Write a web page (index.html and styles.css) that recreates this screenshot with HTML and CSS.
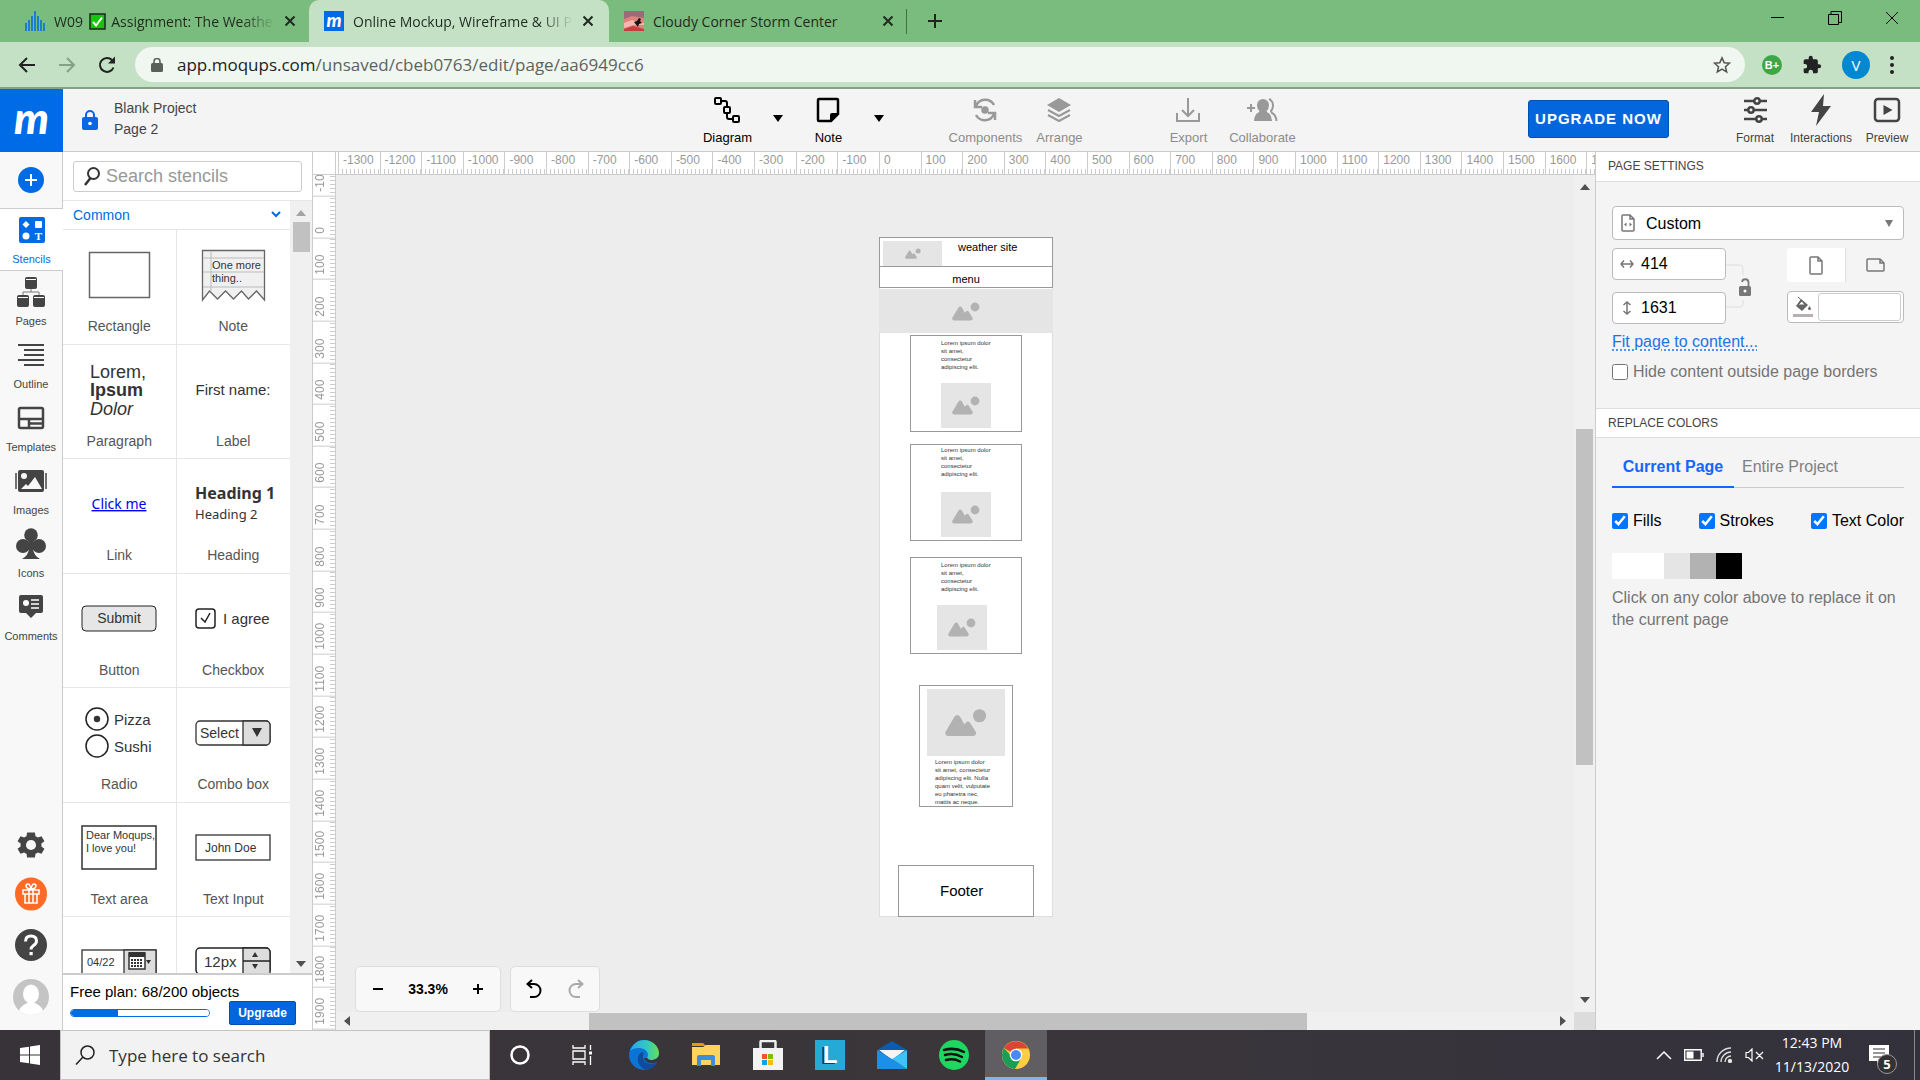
FILE: index.html
```html
<!DOCTYPE html>
<html lang="en">
<head>
<meta charset="utf-8">
<title>Online Mockup, Wireframe &amp; UI Prototyping</title>
<link rel="stylesheet" href="styles.css">
</head>
<body>
<svg class="defs" aria-hidden="true">
  <symbol id="picture" viewBox="0 0 28 19"><path d="M2 18.5h17q2.600-.6 1.300-3.200l-3.500-5.500q-1.500-1.900-3 0l-1 .9-2.600-4.800q-2-2.900-4 0L.4 15.700q-.8 2.500 1.600 2.800z"/><circle cx="23" cy="5" r="4.400"/></symbol>
  <symbol id="close" viewBox="0 0 12 12"><path d="M1.500 1.500l9 9M10.500 1.500l-9 9" fill="none" stroke="currentColor" stroke-width="2"/></symbol>
  <symbol id="caret" viewBox="0 0 10 8"><path d="M0 1h10L5 8z" fill="currentColor"/></symbol>
  <symbol id="up" viewBox="0 0 10 6"><path d="M5 0l5 6H0z"/></symbol>
  <symbol id="down" viewBox="0 0 10 6"><path d="M0 0h10L5 6z"/></symbol>
</svg>

<header class="tabs">
  <div class="tab">
    <svg width="20" height="20" viewBox="0 0 20 20" stroke="#1c7ed0" stroke-width="2"><path d="M1 20V12M4 20V9M7 20V5M10 20V0M13 20V5M16 20V9M19 20V12"/></svg>
    <span class="tab-title fade">W09 <svg class="check" width="17" height="17" viewBox="0 0 17 17"><rect x="1" y="1" width="15" height="15" fill="#16c60c" stroke="#222" stroke-width="1.500"/><path d="M4 9l3 3.500 6-8" fill="none" stroke="#fff" stroke-width="2"/></svg> Assignment: The Weather Site</span>
    <button class="plain" aria-label="Close tab"><svg width="12" height="12"><use href="#close"/></svg></button>
  </div>
  <div class="tab active">
    <span class="m-icon">m</span>
    <span class="tab-title fade">Online Mockup, Wireframe &amp; UI Prototyping</span>
    <button class="plain" aria-label="Close tab"><svg width="12" height="12"><use href="#close"/></svg></button>
  </div>
  <div class="tab">
    <svg width="20" height="20" viewBox="0 0 20 20"><rect width="20" height="20" fill="#e0837c"/><path d="M0 0h20v7L8 5 0 8z" fill="#9c6b77"/><path d="M0 12l8-3 5 2 7 1v2L9 14 0 17z" fill="#f3b9b0"/><path d="M0 18l9-3 11 3v2H0z" fill="#c2403e"/><path d="M10 11l3-1 2-3 2 1-1 2 2 2-3 1-1 3z" fill="#111"/></svg>
    <span class="tab-title">Cloudy Corner Storm Center</span>
    <button class="plain" aria-label="Close tab"><svg width="12" height="12"><use href="#close"/></svg></button>
  </div>
  <span class="tab-sep"></span>
  <button class="plain new-tab" aria-label="New tab"><svg width="14" height="14" viewBox="0 0 14 14"><path d="M7 0v14M0 7h14" stroke="#222" stroke-width="2"/></svg></button>
  <div class="window-buttons">
    <button class="plain" aria-label="Minimize"><svg width="14" height="14" viewBox="0 0 14 14"><path d="M0 6.500h13" stroke="#000"/></svg></button>
    <button class="plain" aria-label="Restore"><svg width="14" height="14" viewBox="0 0 14 14" fill="none" stroke="#000"><path d="M.5 3.500h10v10H.5zM3 3V.5h10.500v11H11"/></svg></button>
    <button class="plain" aria-label="Close"><svg width="14" height="14" viewBox="0 0 14 14"><path d="M1 1l12 12M13 1L1 13" stroke="#000"/></svg></button>
  </div>
</header>

<nav class="browser-bar">
  <button class="plain" aria-label="Back"><svg width="18" height="16" viewBox="0 0 18 16" fill="none" stroke="#222" stroke-width="2"><path d="M17 8H2M9 1L2 8l7 7"/></svg></button>
  <button class="plain" aria-label="Forward"><svg width="18" height="16" viewBox="0 0 18 16" fill="none" stroke="#85a086" stroke-width="2"><path d="M1 8h15M9 1l7 7-7 7"/></svg></button>
  <button class="plain" aria-label="Reload"><svg width="18" height="18" viewBox="0 0 18 18" fill="none" stroke="#222" stroke-width="2"><path d="M15.500 11.500A7 7 0 1 1 14 4l2 2"/><path d="M17 .5v7h-7z" fill="#222" stroke="none"/></svg></button>
  <div class="address">
    <svg width="12" height="14" viewBox="0 0 12 14"><rect y="5" width="12" height="9" rx="1.500" fill="#5a5f5b"/><path d="M3 6V3.500a3 3 0 0 1 6 0V6" fill="none" stroke="#5a5f5b" stroke-width="1.600"/></svg>
    <span class="url"><b>app.moqups.com</b>/unsaved/cbeb0763/edit/page/aa6949cc6</span>
    <svg width="18" height="18" viewBox="0 0 24 24" fill="none" stroke="#555" stroke-width="2"><path d="M12 2.500l2.900 6.400 7 .7-5.300 4.700 1.600 6.900-6.200-3.600-6.200 3.600 1.600-6.900L2.100 9.600l7-.7z"/></svg>
  </div>
  <div class="extensions">
    <span class="bplus">B+</span>
    <svg width="20" height="20" viewBox="0 0 24 24" fill="#222"><path d="M20.500 11H19V7a2 2 0 0 0-2-2h-4V3.500a2.500 2.500 0 0 0-5 0V5H4a2 2 0 0 0-2 2v3.800h1.500a2.700 2.700 0 0 1 0 5.400H2V20a2 2 0 0 0 2 2h3.800v-1.500a2.700 2.700 0 0 1 5.400 0V22H17a2 2 0 0 0 2-2v-4h1.500a2.500 2.500 0 0 0 0-5z"/></svg>
    <span class="profile">V</span>
    <svg width="4" height="18" viewBox="0 0 4 18" fill="#222"><circle cx="2" cy="2" r="2"/><circle cx="2" cy="9" r="2"/><circle cx="2" cy="16" r="2"/></svg>
  </div>
</nav>

<div class="app-bar">
  <div class="app-left">
    <a class="logo" href="#">m</a>
    <svg width="16" height="20" viewBox="0 0 16 20"><rect y="7" width="16" height="13" rx="2" fill="#0a66e6"/><path d="M4 8V5a4 4 0 0 1 8 0v3" fill="none" stroke="#0a66e6" stroke-width="2"/><circle cx="8" cy="13.500" r="1.800" fill="#fff"/></svg>
    <div class="project"><div>Blank Project</div><div>Page 2</div></div>
  </div>
  <div class="app-tools">
    <button class="tool w60"><svg width="28" height="28" viewBox="0 0 28 28" fill="none" stroke="#000" stroke-width="2"><rect x="2" y="2" width="6" height="6" rx="1"/><rect x="11" y="11" width="6" height="6" rx="1"/><rect x="20" y="20" width="6" height="6" rx="1"/><path d="M8 5h4q2 0 2 2v4M14 17v4q0 2 2 2h4"/></svg>Diagram</button>
    <button class="tool arrow" aria-label="Diagram options"><svg width="10" height="8"><use href="#caret"/></svg></button>
    <button class="tool w60"><svg width="28" height="28" viewBox="0 0 28 28"><path d="M5 3h18a1 1 0 0 1 1 1v14l-7 7H5a1 1 0 0 1-1-1V4a1 1 0 0 1 1-1z" fill="none" stroke="#000" stroke-width="2.500"/><path d="M24 17l-8 8v-6q0-2 2-2z"/></svg>Note</button>
    <button class="tool arrow" aria-label="Note options"><svg width="10" height="8"><use href="#caret"/></svg></button>
    <button class="tool off w80 gap-a"><svg width="28" height="28" viewBox="0 0 28 28" fill="none" stroke="#999" stroke-width="2.500"><path d="M5 10A10 10 0 0 1 23 9M23 18A10 10 0 0 1 5 19"/><path d="M4 4v7h7M24 24v-7h-7"/><circle cx="14" cy="14" r="2.500" fill="#999"/></svg>Components</button>
    <button class="tool off w68"><svg width="28" height="28" viewBox="0 0 28 28" fill="#999"><path d="M14 2l12 7-12 7L2 9z"/><path d="M3 14l11 6 11-6M3 19l11 6 11-6" fill="none" stroke="#999" stroke-width="2"/></svg>Arrange</button>
    <button class="tool off w68 gap-b"><svg width="28" height="28" viewBox="0 0 28 28" fill="none" stroke="#999" stroke-width="2"><path d="M14 2v18M8 14l6 6 6-6M3 17v8h22v-8"/></svg>Export</button>
    <button class="tool off w80"><svg width="34" height="28" viewBox="0 0 34 28" fill="#999"><path d="M2 12h8M6 8v8" stroke="#999" stroke-width="2"/><path d="M18 3a6 6 0 0 1 6 6q0 4-2.500 6l1 1.500q4 1.500 4.500 8.500H9q.5-7 4.500-8.500l1-1.500Q12 13 12 9a6 6 0 0 1 6-6z"/><path d="M24 3q4 2 4 6.500 0 3.500-2 5.500l1 2q4 2 4.500 8" fill="none" stroke="#999" stroke-width="2"/></svg>Collaborate</button>
  </div>
  <div class="app-right">
    <button class="upgrade-now">UPGRADE NOW</button>
    <button class="tool dark"><svg width="28" height="28" viewBox="0 0 28 28" fill="#f4f4f4" stroke="#444" stroke-width="2.500"><path d="M3 5h23M3 14h23M3 23h23"/><circle cx="16" cy="5" r="2.700"/><circle cx="10" cy="14" r="2.700"/><circle cx="18" cy="23" r="2.700"/></svg>Format</button>
    <button class="tool dark"><svg width="28" height="32" viewBox="0 0 28 32" fill="#444"><path d="M17 0L4 18h8l-3 14 15-20h-8z"/></svg>Interactions</button>
    <button class="tool dark"><svg width="28" height="28" viewBox="0 0 28 28"><rect x="2" y="3" width="24" height="22" rx="3" fill="none" stroke="#444" stroke-width="2.500"/><path d="M10.500 9l9 5-9 5z" fill="#444"/></svg>Preview</button>
  </div>
</div>

<main class="app">
  <nav class="rail">
    <button class="add" aria-label="Add"><svg width="26" height="26" viewBox="0 0 26 26"><circle cx="13" cy="13" r="13" fill="#006be6"/><path d="M13 7v12M7 13h12" stroke="#fff" stroke-width="2"/></svg></button>
    <button class="rail-item current"><svg width="28" height="28" viewBox="0 0 28 28"><rect x="1" y="1" width="26" height="26" rx="2" fill="#006be6"/><path d="M8 5l3.500 3.500L8 12 4.500 8.500z" fill="#fff"/><rect x="17" y="5" width="7" height="7" rx="1" fill="#fff"/><circle cx="8" cy="20" r="3.500" fill="#fff"/><text x="20.500" y="24" class="t-glyph">T</text></svg>Stencils</button>
    <button class="rail-item"><svg width="28" height="30" viewBox="0 0 28 30" fill="#444"><rect x="8" y="0" width="12" height="12" rx="2"/><rect x="0" y="18" width="12" height="12" rx="2"/><rect x="16" y="18" width="12" height="12" rx="2"/><path d="M9 2.500h10M1 20.500h10M17 20.500h10" stroke="#fff"/><path d="M14 12v3M6 18v-3h16v3" fill="none" stroke="#777"/></svg>Pages</button>
    <button class="rail-item"><svg width="28" height="24" viewBox="0 0 28 24" stroke="#444" stroke-width="2"><path d="M1 2h26M7 7h20M7 12h20M1 17h26M7 22h20"/></svg>Outline</button>
    <button class="rail-item"><svg width="28" height="24" viewBox="0 0 28 24" fill="none" stroke="#444" stroke-width="2.500"><rect x="2" y="2" width="24" height="20" rx="1.500"/><path d="M2 13h24M12 13v9M13 17.500h13"/></svg>Templates</button>
    <button class="rail-item"><svg width="32" height="24" viewBox="0 0 32 24"><rect x="3" y="1" width="26" height="22" rx="2" fill="#444"/><path d="M1 4v16M31 4v16" stroke="#444" stroke-width="1.500"/><circle cx="9" cy="7" r="3" fill="#f8f8f8"/><path d="M6 20l5-5 2 2 7-9 7 12z" fill="#f8f8f8"/></svg>Images</button>
    <button class="rail-item"><svg width="30" height="32" viewBox="0 0 30 32" fill="#444"><circle cx="15" cy="7" r="6.800"/><circle cx="7" cy="18" r="7"/><circle cx="23" cy="18" r="7"/><path d="M12 11h6l-1 10q1 7 7 10H6q6-3 7-10z"/></svg>Icons</button>
    <button class="rail-item"><svg width="26" height="24" viewBox="0 0 26 24"><path d="M3 0h20a2 2 0 0 1 2 2v14a2 2 0 0 1-2 2h-5l-5 5-5-5H3a2 2 0 0 1-2-2V2a2 2 0 0 1 2-2z" fill="#444"/><circle cx="8" cy="8" r="3" fill="#fff"/><path d="M13 5h8M13 9h8M13 13h8" stroke="#fff" stroke-width="1.500"/></svg>Comments</button>
    <div class="rail-bottom">
      <button class="plain" aria-label="Settings"><svg width="32" height="28" viewBox="2 2 20 20" fill="#444"><path d="M19.400 13a7 7 0 0 0 0-2l2.200-1.700-2.100-3.600-2.600 1a7 7 0 0 0-1.700-1L14.800 3H9.200l-.4 2.700a7 7 0 0 0-1.700 1l-2.600-1-2.100 3.600L4.600 11a7 7 0 0 0 0 2l-2.200 1.700 2.100 3.600 2.600-1a7 7 0 0 0 1.700 1l.4 2.700h5.600l.4-2.700a7 7 0 0 0 1.700-1l2.600 1 2.100-3.600z"/><circle cx="12" cy="12" r="3.600" fill="#f8f8f8"/></svg></button>
      <button class="plain" aria-label="Gifts"><svg width="32" height="34" viewBox="0 0 32 34"><ellipse cx="16" cy="17" rx="16" ry="16.500" fill="#ff6a26"/><g fill="none" stroke="#fff" stroke-width="1.500"><path d="M8 13h16v4H8zM10 17v9h12v-9M14 13v13M18 13v13M16 12c-6 0-6-5-3-5q2 0 3 5 1-5 3-5c3 0 3 5-3 5"/></g></svg></button>
      <button class="plain" aria-label="Help"><svg width="32" height="32" viewBox="0 0 32 32"><circle cx="16" cy="16" r="16" fill="#444"/><path d="M10.500 12.500q0-5.500 5.500-5.500t5.500 5q0 2.500-3 4.500-2.500 1.800-2.500 4" fill="none" stroke="#fff" stroke-width="3"/><rect x="14.500" y="23" width="3.200" height="3.200" fill="#fff"/></svg></button>
      <button class="plain" aria-label="Account"><svg width="36" height="36" viewBox="0 0 36 36"><clipPath id="av"><circle cx="18" cy="18" r="18"/></clipPath><g clip-path="url(#av)"><path d="M0 0h36v36H0z" fill="#c4c4c4"/><ellipse cx="18" cy="15" rx="8" ry="9.500" fill="#fff"/><path d="M5 36q1-9 9-12h8q8 3 9 12z" fill="#fff"/></g></svg></button>
    </div>
  </nav>

  <section class="stencils">
    <div class="search-row">
      <label class="search"><svg width="16" height="20" viewBox="0 0 16 20" fill="none" stroke="#333"><circle cx="9.500" cy="6.500" r="5.500" stroke-width="2"/><path d="M6.500 11L1 18" stroke-width="2.500"/></svg><input type="text" placeholder="Search stencils" aria-label="Search stencils"></label>
    </div>
    <div class="list">
      <div class="list-body">
        <button class="category">Common<svg width="10" height="7" viewBox="0 0 10 7" fill="none" stroke="#006be6" stroke-width="2"><path d="M1 1l4 4 4-4"/></svg></button>
        <div class="tiles">
          <button class="tile"><svg width="80" height="60"><rect x="10.500" y="7.500" width="60" height="45" fill="none" stroke="#666" stroke-width="1.500"/></svg>Rectangle</button>
          <button class="tile"><svg width="80" height="60"><path d="M9.500 55V5.500h62V55l-8-9-8 8-7-8-8 8-8-8-8 8-8-8z" fill="#f0f0f0" stroke="#666" stroke-width="1.300"/><path d="M10 13h61M10 27h61M10 42h61M18 6v40" stroke="#bbb"/><text x="19" y="24" class="t11">One more</text><text x="19" y="37" class="t11">thing..</text></svg>Note</button>
          <button class="tile"><svg width="80" height="60"><text x="11" y="18" class="t18">Lorem,</text><text x="11" y="36" class="t18 bold">Ipsum</text><text x="11" y="55" class="t18 ital">Dolor</text></svg>Paragraph</button>
          <button class="tile"><svg width="84" height="60"><text x="42" y="35" class="t15 mid">First name:</text></svg>Label</button>
          <button class="tile"><svg width="80" height="60"><text x="40" y="35" class="t14 mid link hum">Click me</text></svg>Link</button>
          <button class="tile"><svg width="84" height="60"><text x="4" y="25" class="t16 bold hum">Heading 1</text><text x="4" y="45" class="t13 hum">Heading 2</text></svg>Heading</button>
          <button class="tile"><svg width="80" height="60"><rect x="3" y="17" width="74" height="25" rx="4" fill="#e6e6e6" stroke="#222"/><text x="40" y="34" class="t14 mid">Submit</text></svg>Button</button>
          <button class="tile"><svg width="80" height="60"><rect x="3" y="20" width="19" height="19" rx="3" fill="#fff" stroke="#222" stroke-width="1.500"/><path d="M8 29l4 4 5-9" fill="none" stroke="#222" stroke-width="1.500"/><text x="30" y="35" class="t15">I agree</text></svg>Checkbox</button>
          <button class="tile"><svg width="80" height="60"><g fill="#fff" stroke="#222" stroke-width="1.500"><circle cx="18" cy="16" r="11"/><circle cx="18" cy="43" r="11"/></g><circle cx="18" cy="16" r="3.200" fill="#333"/><text x="35" y="22" class="t15">Pizza</text><text x="35" y="49" class="t15">Sushi</text></svg>Radio</button>
          <button class="tile"><svg width="80" height="60"><rect x="3" y="18" width="74" height="24" rx="4" fill="#fff" stroke="#333" stroke-width="1.300"/><path d="M50 18h23a4 4 0 0 1 4 4v16a4 4 0 0 1-4 4H50z" fill="#ddd" stroke="#333" stroke-width="1.300"/><path d="M59 25h10l-5 9z" fill="#333"/><text x="7" y="35" class="t14">Select</text></svg>Combo box</button>
          <button class="tile"><svg width="80" height="60"><rect x="3" y="8" width="74" height="43" fill="#fff" stroke="#333" stroke-width="1.500"/><text x="7" y="21" class="t11">Dear Moqups,</text><text x="7" y="34" class="t11">I love you!</text></svg>Text area</button>
          <button class="tile"><svg width="80" height="60"><rect x="3" y="17" width="74" height="25" fill="#fff" stroke="#333" stroke-width="1.300"/><text x="12" y="34" class="t12">John Doe</text></svg>Text Input</button>
          <button class="tile" aria-label="Date picker"><svg width="80" height="60"><rect x="3" y="18" width="74" height="25" fill="#fff" stroke="#333" stroke-width="1.300"/><rect x="45" y="18" width="32" height="25" fill="#ddd" stroke="#333" stroke-width="1.300"/><text x="8" y="34" class="t11">04/22</text><path d="M50 21h16v16H50z" fill="#fff" stroke="#333" stroke-width="1.500"/><path d="M50 20h16v5H50z" fill="#333"/><path d="M52 28h12M52 31h12M52 34h12" stroke="#333" stroke-width="2" stroke-dasharray="2 1"/><path d="M67 28h5l-2.500 4z" fill="#333"/></svg></button>
          <button class="tile" aria-label="Number stepper"><svg width="80" height="60"><rect x="3" y="16" width="74" height="26" rx="4" fill="#fff" stroke="#222" stroke-width="1.500"/><path d="M50 16h23a4 4 0 0 1 4 4v22H50zM50 29h27" fill="#ddd" stroke="#222" stroke-width="1.300"/><path d="M59 25h6l-3-5zM59 32h6l-3 5z" fill="#333"/><text x="11" y="35" class="t15">12px</text></svg></button>
        </div>
      </div>
      <div class="scroll-v light"><svg width="10" height="6" fill="#a3a3a3"><use href="#up"/></svg><span class="thumb-list"></span><svg width="10" height="6" fill="#505050"><use href="#down"/></svg></div>
    </div>
    <div class="plan">
      <label for="plan-use">Free plan: 68/200 objects</label>
      <div class="plan-row"><progress id="plan-use" max="200" value="68"></progress><button class="upgrade">Upgrade</button></div>
    </div>
  </section>

  <section class="workspace">
    <div class="corner"></div>
    <div class="ruler-x"><div class="scale-x" id="scale-x"></div></div>
    <div class="ruler-y"><div class="scale-y" id="scale-y"></div></div>
    <div class="view">
      <div class="canvas">
        <div class="page">
          <div class="item box site-head"></div>
          <div class="item ph site-logo"><svg width="16" height="11"><use href="#picture"/></svg></div>
          <div class="item site-name">weather site</div>
          <div class="item box site-menu">menu</div>
          <div class="item ph hero"><svg width="28" height="19"><use href="#picture"/></svg></div>
          <div class="item box card c1"></div>
          <p class="item lorem clip l1">Lorem ipsum dolor sit amet, consectetur adipiscing elit. Nulla quam velit</p>
          <div class="item ph p1"><svg width="28" height="19"><use href="#picture"/></svg></div>
          <div class="item box card c2"></div>
          <p class="item lorem clip l2">Lorem ipsum dolor sit amet, consectetur adipiscing elit. Nulla quam velit</p>
          <div class="item ph p2"><svg width="28" height="19"><use href="#picture"/></svg></div>
          <div class="item box card c3"></div>
          <p class="item lorem clip l3">Lorem ipsum dolor sit amet, consectetur adipiscing elit. Nulla quam velit</p>
          <div class="item ph p3"><svg width="28" height="19"><use href="#picture"/></svg></div>
          <div class="item box c4"></div>
          <div class="item ph p4"><svg width="42" height="29"><use href="#picture"/></svg></div>
          <p class="item lorem l4">Lorem ipsum dolor sit amet, consectetur adipiscing elit. Nulla quam velit, vulputate eu pharetra nec, mattis ac neque.</p>
          <div class="item box foot">Footer</div>
        </div>
        <div class="controls">
          <div class="control zoom"><button class="plain" aria-label="Zoom out"><svg width="12" height="12"><path d="M1 6h10" stroke="#000" stroke-width="2"/></svg></button><output>33.3%</output><button class="plain" aria-label="Zoom in"><svg width="12" height="12"><path d="M1 6h10M6 1v10" stroke="#000" stroke-width="2"/></svg></button></div>
          <div class="control history"><button class="plain" aria-label="Undo"><svg width="16" height="20" viewBox="0 0 16 20" fill="none" stroke="#000" stroke-width="2"><path d="M6 1L1.500 5 6 9M2 5h6a6.500 6.500 0 0 1 0 13H4"/></svg></button><button class="plain" aria-label="Redo"><svg width="16" height="20" viewBox="0 0 16 20" fill="none" stroke="#aaa" stroke-width="2"><path d="M10 1l4.500 4L10 9M14 5H8a6.500 6.500 0 0 0 0 13h4"/></svg></button></div>
        </div>
      </div>
      <div class="scroll-v"><svg width="10" height="6" fill="#505050"><use href="#up"/></svg><div class="track-y"><span class="thumb-y"></span></div><svg width="10" height="6" fill="#505050"><use href="#down"/></svg></div>
      <div class="scroll-h"><svg width="6" height="10" viewBox="0 0 6 10" fill="#505050"><path d="M6 0v10L0 5z"/></svg><div class="track-x"><span class="thumb-x"></span></div><svg width="6" height="10" viewBox="0 0 6 10" fill="#505050"><path d="M0 0v10l6-5z"/></svg></div>
      <div class="scroll-corner"></div>
    </div>
  </section>

  <aside class="settings">
    <h2>PAGE SETTINGS</h2>
    <div class="page-form">
      <div class="field preset">
        <svg width="14" height="18" viewBox="0 0 14 18" fill="none" stroke="#777" stroke-width="1.500"><path d="M2 1h7l4 4v11a1 1 0 0 1-1 1H2a1 1 0 0 1-1-1V2a1 1 0 0 1 1-1zM9 1v4h4"/><path d="M5.500 8.500v4l-2.500-2zM8.500 8.500v4l2.500-2z" fill="#777" stroke="none"/></svg>
        <select aria-label="Page size"><option>Custom</option></select>
        <svg width="8" height="7" viewBox="0 0 8 7" fill="#777"><path d="M0 0h8L4 7z"/></svg>
      </div>
      <div class="size-row">
        <div class="sizes">
          <div class="field"><svg width="14" height="10" viewBox="0 0 14 10" fill="none" stroke="#777" stroke-width="1.500"><path d="M1 5h12M4 1.500L1 5l3 3.500M10 1.500L13 5l-3 3.500"/></svg><input type="text" value="414" aria-label="Width"></div>
          <div class="field"><svg width="14" height="14" viewBox="0 0 14 14" fill="none" stroke="#777" stroke-width="1.500"><path d="M7 1v12M3.500 4L7 1l3.500 3M3.500 10L7 13l3.500-3"/></svg><input type="text" value="1631" aria-label="Height"></div>
        </div>
        <button class="plain lock" aria-label="Lock ratio"><svg width="26" height="46" viewBox="0 0 26 46" fill="none"><path d="M0 2h14q3 0 3 3v7M0 44h14q3 0 3-3v-4" stroke="#ddd"/><rect x="13" y="23" width="12" height="10" rx="1.500" fill="#777"/><path d="M16 19a3.300 3.300 0 0 1 6.500 0v4" stroke="#777" stroke-width="1.800"/><circle cx="19" cy="28" r="1.500" fill="#fff"/></svg></button>
        <div class="page-look">
          <div class="orient">
            <button class="on" aria-label="Portrait"><svg width="14" height="19" viewBox="0 0 14 19" fill="none" stroke="#777" stroke-width="1.500"><path d="M2 1h7l4 4v12a1 1 0 0 1-1 1H2a1 1 0 0 1-1-1V2a1 1 0 0 1 1-1zM9 1v4h4"/></svg></button>
            <button aria-label="Landscape"><svg width="19" height="14" viewBox="0 0 19 14" fill="none" stroke="#777" stroke-width="1.500"><path d="M2 1h12l4 4v7a1 1 0 0 1-1 1H2a1 1 0 0 1-1-1V2a1 1 0 0 1 1-1zM14 1v4h4"/></svg></button>
          </div>
          <button class="fill" aria-label="Page fill"><svg width="20" height="20" viewBox="0 0 20 20"><path d="M8 2l7 6-6 6-6-5z" fill="#666"/><path d="M5 0l9 8M5 8l4-4 3 4z" stroke="#666" fill="#fff"/><path d="M16.500 9q3 4 0 4t0-4z" fill="#666"/><path d="M0 18.500h20" stroke="#b8b0b0" stroke-width="3"/></svg><span class="fill-color"></span></button>
        </div>
      </div>
      <a class="fit" href="#">Fit page to content...</a>
      <label class="tick muted"><input type="checkbox">Hide content outside page borders</label>
    </div>
    <h2 class="second">REPLACE COLORS</h2>
    <div class="colors-form">
      <div class="color-tabs"><button class="on">Current Page</button><button>Entire Project</button></div>
      <div class="ticks"><label class="tick"><input type="checkbox" checked>Fills</label><label class="tick"><input type="checkbox" checked>Strokes</label><label class="tick"><input type="checkbox" checked>Text Color</label></div>
      <div class="swatches"><button class="sw white" aria-label="White"></button><button class="sw white" aria-label="White"></button><button class="sw g1" aria-label="Light gray"></button><button class="sw g2" aria-label="Gray"></button><button class="sw black" aria-label="Black"></button></div>
      <p class="hint">Click on any color above to replace it on the current page</p>
    </div>
  </aside>
</main>

<footer class="taskbar">
  <button class="start" aria-label="Start"><svg width="20" height="20" viewBox="0 0 20 20" fill="#fff"><path d="M0 3l9-1.300V9.500H0zM10 1.500L20 0v9.500H10zM0 10.500h9v7.800L0 17zM10 10.500h10V20l-10-1.500z"/></svg></button>
  <label class="task-search"><svg width="20" height="20" viewBox="0 0 20 20" fill="none" stroke="#222" stroke-width="1.500"><circle cx="12.500" cy="7.500" r="6.500"/><path d="M8 12l-7 7.500"/></svg><input type="text" placeholder="Type here to search" aria-label="Type here to search"></label>
  <div class="apps">
    <button aria-label="Cortana"><svg width="20" height="20" viewBox="0 0 20 20"><circle cx="10" cy="10" r="8.500" fill="none" stroke="#fff" stroke-width="2.500"/></svg></button>
    <button aria-label="Task view"><svg width="21" height="20" viewBox="0 0 21 20" fill="none" stroke="#fff" stroke-width="1.300"><path d="M1 0v3h12V0M1 6h12v8H1zM1 20v-3h12v3M18.500 0v5M18.500 11v9"/><path d="M17 6.500h3v3h-3z" fill="#fff" stroke="none"/></svg></button>
    <button aria-label="Edge"><svg width="30" height="30" viewBox="0 0 30 30"><defs><linearGradient id="e1"><stop stop-color="#2aa6ea"/><stop offset=".6" stop-color="#34c9c0"/><stop offset="1" stop-color="#66e04a"/></linearGradient></defs><circle cx="15" cy="15" r="15" fill="#0c74d4"/><path d="M1 11C4 3 10 0 15 0c9 0 15 7 15 13 0 7-9 9-12 5 3-4-1-10-8-10-4 0-7 1-9 3z" fill="url(#e1)"/><path d="M13 12c-6 3-6 14 4 18 6-1 9-4 11-8-5 3-13 2-14-4-.5-3 1-5 1-5z" fill="#114a9a"/><path d="M18 18c3 4 10 2 12-2v6q-1 2-2 0c-5 2-12 1-13-4z" fill="#37343a"/></svg></button>
    <button aria-label="File Explorer"><svg width="28" height="24" viewBox="0 0 28 24"><path d="M0 0h11l3 3H0z" fill="#e59b00"/><path d="M0 4h11l3-2h14v20H0z" fill="#ffd45e"/><path d="M5 23V14q0-2 2-2h14q2 0 2 2v9h-4v-6H9v6z" fill="#3a8ee0"/></svg></button>
    <button aria-label="Store"><svg width="30" height="30" viewBox="0 0 30 30"><path d="M7.500 9V2q0-1 1-1h13q1 0 1 1v7" fill="none" stroke="#eee" stroke-width="2.500"/><path d="M0 8h30v22H0z" fill="#f2f2f2"/><path d="M9 14h5v5H9z" fill="#f35325"/><path d="M15 14h5v5h-5z" fill="#81bc06"/><path d="M9 20h5v5H9z" fill="#05a6f0"/><path d="M15 20h5v5h-5z" fill="#ffba08"/></svg></button>
    <button aria-label="Lockdown"><span class="l-app">L</span></button>
    <button aria-label="Mail"><svg width="30" height="28" viewBox="0 0 30 28"><path d="M0 9L15 0l15 9v6H0z" fill="#0a5cb0"/><path d="M2 9h26L15 19z" fill="#f5f5f5"/><path d="M0 9l15 9 15 10H0z" fill="#1a90e6"/><path d="M30 9v19L15 18z" fill="#3fc3f5"/></svg></button>
    <button aria-label="Spotify"><svg width="30" height="30" viewBox="0 0 30 30"><circle cx="15" cy="15" r="15" fill="#1ed760"/><path d="M5 10q11-3 20 2M6 15q9-2.500 17 2M7 20q8-2 14 1.500" fill="none" stroke="#111" stroke-width="2.500" stroke-linecap="round"/></svg></button>
    <button class="running" aria-label="Chrome"><svg width="28" height="28" viewBox="0 0 28 28"><circle cx="14" cy="14" r="14" fill="#ffcd41"/><path d="M14 14L1.900 7A14 14 0 0 1 26.200 7.500H14z" fill="#db4437"/><path d="M1.900 7A14 14 0 0 0 13 28l6-10.500-5 2.500z" fill="#1a9d57"/><circle cx="14" cy="14" r="6.300" fill="#fff"/><circle cx="14" cy="14" r="5" fill="#4a8af4"/></svg></button>
  </div>
  <div class="tray">
    <svg width="16" height="10" viewBox="0 0 16 10"><path d="M1 9l7-7 7 7" fill="none" stroke="#fff" stroke-width="1.500"/></svg>
    <svg width="20" height="12" viewBox="0 0 20 12"><path d="M.7.700h16.500v10.500H.7zM19 4v4" fill="none" stroke="#fff" stroke-width="1.400"/><path d="M2.500 2.500h7v7h-7z" fill="#fff"/></svg>
    <svg width="17" height="16" viewBox="0 0 17 16" fill="none" stroke="#ddd" stroke-width="1.400"><path d="M1 15A14 14 0 0 1 15 1M5 15A10 10 0 0 1 15 5M9 15a6 6 0 0 1 6-6"/><circle cx="14" cy="14" r="1.500" fill="#fff"/></svg>
    <svg width="19" height="14" viewBox="0 0 19 14" fill="none" stroke="#fff" stroke-width="1.200"><path d="M1 4.500h2.500L7 1v12L3.500 9.500H1zM11 4l7 7M18 4l-7 7"/></svg>
    <div class="clock"><div>12:43 PM</div><div>11/13/2020</div></div>
    <button class="plain notes" aria-label="Notifications"><svg width="20" height="20" viewBox="0 0 20 20"><path d="M0 0h20v16h-8l-4 4v-4H0z" fill="#fff"/><path d="M4 4h12M4 8h12M4 12h12" stroke="#333" stroke-width="1.200"/></svg><span class="badge">5</span></button>
    <span class="show-desktop"></span>
  </div>
</footer>
<script src="rulers.js"></script>
</body>
</html>
```

FILE: rulers.js
```js
// Fill both rulers with one cell for each 100 canvas units.
function fillRuler(id, from, to) {
  const scale = document.getElementById(id);
  for (let unit = from; unit <= to; unit += 100) {
    const cell = document.createElement('span');
    cell.className = 'mark';
    cell.textContent = unit;
    scale.appendChild(cell);
  }
}
fillRuler('scale-x', -1300, 1700);
fillRuler('scale-y', -100, 2000);
```

FILE: styles.css
```css
* { box-sizing: border-box; }
body {
  margin: 0;
  height: 100vh;
  display: flex;
  flex-direction: column;
  overflow: hidden;
  font-family: "Liberation Sans", Arial, sans-serif;
  color: #444;
}
button, input, select { font: inherit; color: inherit; }
button { border: 0; background: none; padding: 0; margin: 0; }
svg { flex: none; display: block; }
.defs { position: absolute; width: 0; height: 0; }
.plain { display: flex; align-items: center; justify-content: center; }

/* browser tabs */
.tabs { height: 42px; flex: none; display: flex; background: #7abc7d; color: #1f2a20; font-family: "Open Sans", sans-serif; }
.tab { width: 300px; height: 42px; display: flex; align-items: center; padding: 0 15px; gap: 9px; }
.tab:first-child { width: 309px; padding-left: 25px; padding-right: 13px; }
.tab.active { background: #c4e1c5; border-radius: 10px 10px 0 0; }
.tab-title { flex: 1; min-width: 0; white-space: nowrap; overflow: hidden; font-size: 14px; }
.fade { mask-image: linear-gradient(90deg, #000 85%, transparent); }
.check { display: inline-block; vertical-align: -3px; margin: 0 2px; }
.m-icon { width: 20px; height: 20px; background: #006be6; color: #fff; font: italic 900 19px/17px Lato, sans-serif; text-align: center; }
.tab-sep { width: 1px; height: 25px; margin-top: 9px; margin-left: -3px; background: #40743f; }
.new-tab { width: 56px; }
.window-buttons { margin-left: auto; display: flex; }
.window-buttons button { width: 57px; height: 36px; }

/* address bar */
.browser-bar { height: 47px; flex: none; display: flex; align-items: center; background: #c4e1c5; border-bottom: 2px solid #84a085; padding-left: 7px; }
.browser-bar > button { width: 40px; }
.address { flex: 1; height: 35px; border-radius: 18px; background: #f0f7f0; margin-left: 8px; padding: 0 14px 0 16px; display: flex; align-items: center; gap: 14px; }
.url { flex: 1; font: 17px "Open Sans", sans-serif; color: #5c635d; }
.url b { font-weight: 400; color: #1d211d; }
.extensions { width: 175px; display: flex; align-items: center; justify-content: space-between; padding: 0 26px 0 17px; }
.bplus { width: 20px; height: 20px; border-radius: 50%; background: #3fa648; color: #fff; font: bold 11px/20px "Liberation Sans", sans-serif; text-align: center; }
.profile { width: 28px; height: 28px; border-radius: 50%; background: #0288d1; color: #fff; font: 15px/28px "Open Sans", sans-serif; text-align: center; }

/* application bar */
.app-bar { height: 63px; flex: none; display: flex; background: #f4f4f4; border-bottom: 1px solid #ccc; }
.app-left { flex: 698 1 0; display: flex; align-items: center; }
.logo { width: 63px; height: 63px; margin-right: 19px; background: #006be6; color: #fff; font: italic 900 44px/56px Lato, sans-serif; text-align: center; text-decoration: none; }
.project { margin-left: 16px; padding-bottom: 2px; font-size: 14px; line-height: 21px; }
.app-tools { display: flex; }
.app-right { flex: 618 1 0; display: flex; justify-content: flex-end; align-items: center; }
.tool { height: 62px; display: grid; grid-template-rows: 38px 18px; justify-items: center; align-items: center; align-content: start; padding-top: 2px; font-size: 13px; line-height: 14px; color: #000; white-space: nowrap; }
.w60 { width: 60px; }
.w68 { width: 68px; }
.w80 { width: 80px; }
.arrow { width: 41px; grid-template-rows: 54px; }
.off { color: #8c8c8c; }
.gap-a { margin-left: 46px; }
.gap-b { margin-left: 61px; }
.dark { width: 66px; color: #444; font-size: 12px; }
.upgrade-now { width: 141px; height: 38px; margin: 0 53px 2px 0; padding-bottom: 2px; border: 1px solid #0050b0; border-radius: 3px; background: #0366dc; color: #fff; font-weight: bold; font-size: 15px; letter-spacing: 1px; white-space: nowrap; }

/* left rail */
.app { flex: 1; min-height: 0; display: flex; }
.rail { width: 63px; flex: none; display: flex; flex-direction: column; background: #f8f8f8; border-right: 1px solid #ccc; }
.add { height: 57px; border-bottom: 1px solid #ccc; display: flex; align-items: center; justify-content: center; flex: none; }
.rail-item { height: 63px; flex: none; display: grid; grid-template-rows: 42px 16px; justify-items: center; align-items: center; font-size: 11px; line-height: 16px; }
.current { height: 62px; width: 63px; background: #fff; color: #006be6; border-bottom: 1px solid #ccc; }
.t-glyph { font: bold 11px "Liberation Serif", serif; fill: #fff; text-anchor: middle; }
.rail-bottom { margin-top: auto; display: flex; flex-direction: column; align-items: center; gap: 18px; padding-bottom: 15px; }

/* stencil panel */
.stencils { width: 250px; flex: none; display: flex; flex-direction: column; background: #fff; border-right: 1px solid #ccc; }
.search-row { height: 49px; padding: 9px 10px 0 10px; border-bottom: 1px solid #e6e6e6; flex: none; }
.search { height: 31px; display: flex; align-items: center; gap: 6px; border: 1px solid #ccc; border-radius: 3px; padding-left: 10px; }
.search input { flex: 1; min-width: 0; border: 0; outline: 0; padding: 0; background: none; font-size: 18px; }
::placeholder { color: #999; opacity: 1; }
.list { flex: 1; min-height: 0; display: flex; overflow: hidden; }
.list-body { flex: 1; overflow: hidden; }
.category { width: 100%; height: 29px; display: flex; align-items: center; justify-content: space-between; padding: 0 9px 1px 10px; font-size: 14px; color: #006be6; border-bottom: 1px solid #e6e6e6; }
.tiles { display: grid; grid-template-columns: 1fr 1fr; grid-template-rows: repeat(4, 115px 114px); }
.tile { display: flex; flex-direction: column; align-items: center; gap: 13px; padding-top: 15px; font-size: 14px; line-height: 16px; border-bottom: 1px solid #e6e6e6; color: #555; }
.tile:nth-child(odd) { border-right: 1px solid #e6e6e6; }
.tile text { fill: #333; font-family: "Liberation Sans", Arial, sans-serif; }
.tile .hum { font-family: "Noto Sans", sans-serif; }
.t11 { font-size: 11px; }
.t12 { font-size: 12px; }
.t13 { font-size: 13px; }
.t14 { font-size: 14px; }
.t15 { font-size: 15px; }
.t16 { font-size: 16px; }
.t18 { font-size: 18px; }
.bold { font-weight: bold; }
.ital { font-style: italic; }
.mid { text-anchor: middle; }
.tile .link { fill: #00e; text-decoration: underline; }
.plan { height: 57px; flex: none; border-top: 2px solid #ccc; padding: 8px 16px 0 7px; color: #000; font-size: 15px; line-height: 18px; }
.plan-row { display: flex; justify-content: space-between; }
progress { appearance: none; width: 140px; height: 8px; margin-top: 8px; border: 1px solid #006be6; border-radius: 4px; background: #fff; overflow: hidden; }
progress::-webkit-progress-bar { background: #fff; }
progress::-webkit-progress-value { background: #006be6; }
.upgrade { width: 67px; height: 24px; border: 1px solid #0050b0; border-radius: 2px; background: #0366dc; color: #fff; font-weight: bold; font-size: 12px; }

/* scroll bars */
.scroll-v { width: 21px; flex: none; display: flex; flex-direction: column; align-items: center; background: #f0f0f0; padding: 9px 0; }
.thumb-list { width: 17px; height: 30px; margin: 6px 0 auto; background: #c1c1c1; }
.track-y { flex: 1; width: 17px; display: grid; grid-template-rows: 240fr 337fr 233fr; }
.thumb-y { grid-row: 2; background: #c1c1c1; }
.light { width: 22px; padding: 9px 0 6px; }

/* workspace */
.workspace { flex: 1; min-width: 0; display: grid; grid-template-columns: 23px minmax(0, 1fr); grid-template-rows: 23px minmax(0, 1fr); }
.corner { border-right: 1px solid #ccc; border-bottom: 1px solid #ccc; background: #fff; }
.ruler-x, .ruler-y { overflow: hidden; background: #fff; color: #999; font-size: 12px; }
.ruler-x { border-bottom: 1px solid #ccc; }
.ruler-y { border-right: 1px solid #ccc; }
.scale-x { display: flex; width: 1290px; height: 22px; margin-left: 2px; }
.scale-y { display: flex; flex-direction: column; height: 916px; margin-top: -20px; }
.mark { flex: 1 1 0; min-width: 0; min-height: 0; }
.scale-x .mark { border-left: 1px solid #ccc; padding-left: 4px; line-height: 16px; background: repeating-linear-gradient(90deg, transparent 0 3px, #ccc 3px 4px) bottom / 100% 5px no-repeat; }
.scale-y .mark { border-top: 1px solid #ccc; padding-top: 4px; padding-left: 6px; line-height: 15px; writing-mode: vertical-rl; transform: rotate(180deg); background: repeating-linear-gradient(180deg, transparent 0 3px, #ccc 3px 4px) left / 5px 100% no-repeat; }
.view { display: grid; grid-template-columns: minmax(0, 1fr) 21px; grid-template-rows: minmax(0, 1fr) 18px; }
.canvas { position: relative; background: #ededed; display: flex; align-items: flex-end; overflow: hidden; }
.scroll-h { background: #f0f0f0; display: flex; align-items: center; padding: 0 8px; }
.track-x { flex: 1; height: 17px; display: grid; grid-template-columns: 239fr 718fr 253fr; }
.thumb-x { grid-column: 2; background: #c1c1c1; }
.scroll-corner { background: #dcdcdc; }
.controls { display: flex; gap: 9px; padding-left: 19px; z-index: 1; }
.control { height: 46px; display: flex; align-items: center; justify-content: space-between; border: 1px solid #ddd; border-radius: 5px; background: #f8f8f8; color: #000; font-weight: bold; font-size: 14px; }
.zoom { width: 146px; padding: 0 16px; }
.history { width: 90px; padding: 0 15px; }

/* mockup page on the canvas */
.page { position: absolute; left: 543px; top: 62px; width: 174px; height: 680px; background: #fff; border: 1px solid #ddd; color: #000; }
.item { position: absolute; margin: 0; }
.box { border: 1px solid #999; }
.ph { background: #e5e5e5; display: flex; align-items: center; justify-content: center; fill: #b2b2b2; }
.site-head { left: -1px; top: -1px; width: 174px; height: 30px; }
.site-logo { left: 3px; top: 3px; width: 59px; height: 25px; }
.site-name { left: 78px; top: 3px; font-size: 11px; line-height: 12px; }
.site-menu { left: -1px; top: 28px; width: 174px; height: 22px; font-size: 11px; line-height: 24px; text-align: center; }
.hero { left: -1px; top: 51px; width: 174px; height: 44px; }
.card { left: 30px; width: 112px; height: 97px; }
.c1 { top: 97px; }
.c2 { top: 206px; }
.c3 { top: 319px; }
.lorem { left: 61px; width: 56px; font-size: 6px; line-height: 8px; color: #333; }
.clip { width: 50px; height: 34px; overflow: hidden; }
.l1 { top: 101px; }
.l2 { top: 208px; }
.l3 { top: 323px; }
.p1, .p2, .p3 { width: 50px; height: 45px; }
.p1 { left: 61px; top: 145px; }
.p2 { left: 61px; top: 254px; }
.p3 { left: 57px; top: 367px; }
.c4 { left: 39px; top: 447px; width: 94px; height: 122px; }
.p4 { left: 47px; top: 451px; width: 78px; height: 67px; }
.l4 { left: 55px; top: 520px; }
.foot { left: 18px; top: 627px; width: 136px; height: 52px; padding-left: 41px; font-size: 15px; line-height: 50px; }

/* page settings */
.settings { width: 325px; flex: none; background: #f4f4f4; border-left: 1px solid #ccc; font-size: 16px; color: #000; }
h2 { margin: 0; height: 30px; padding-left: 12px; background: #fff; border-bottom: 1px solid #ddd; color: #444; font-weight: 400; font-size: 12px; line-height: 28px; }
.second { border-top: 1px solid #ddd; }
.page-form { height: 226px; padding: 24px 16px 0; display: flex; flex-direction: column; align-items: flex-start; }
.field { height: 32px; display: flex; align-items: center; gap: 7px; padding-left: 7px; border: 1px solid #bbb; border-radius: 4px; background: #fff; }
.field input { width: 60px; border: 0; outline: 0; padding: 0; background: none; }
.preset { height: 34px; align-self: stretch; gap: 11px; padding: 0 10px 0 8px; }
.preset select { flex: 1; appearance: none; border: 0; background: none; outline: 0; padding: 0; }
.size-row { align-self: stretch; display: flex; margin-top: 8px; }
.sizes { width: 114px; display: flex; flex-direction: column; gap: 12px; }
.lock { height: 76px; }
.page-look { width: 117px; margin-left: auto; display: flex; flex-direction: column; gap: 9px; }
.orient { display: flex; height: 34px; }
.orient button { flex: 1; display: flex; align-items: center; justify-content: center; }
.orient .on { background: #fff; border-right: 1px solid #ddd; border-radius: 3px 0 0 3px; }
.fill { height: 32px; display: flex; align-items: center; gap: 5px; padding: 1px 2px 1px 5px; background: #fff; border: 1px solid #bbb; border-radius: 4px; }
.fill-color { flex: 1; align-self: stretch; border: 1px solid #ccc; border-radius: 3px; }
.fit { margin-top: 9px; line-height: 18px; color: #1a73e8; text-decoration: underline dotted; text-underline-offset: 3px; }
.tick { display: flex; align-items: center; gap: 5px; line-height: 20px; white-space: nowrap; }
.tick input { width: 16px; height: 16px; margin: 0; accent-color: #0075ff; }
.muted { margin-top: 11px; color: #757575; }
.colors-form { padding: 14px 16px; }
.color-tabs { display: flex; height: 36px; border-bottom: 1px solid #ccc; color: #808080; }
.color-tabs button { padding: 0 8px 6px; height: 36px; }
.color-tabs .on { width: 122px; padding-bottom: 4px; color: #1565ff; font-weight: bold; border-bottom: 2px solid #1565ff; white-space: nowrap; }
.ticks { display: flex; justify-content: space-between; margin-top: 23px; }
.swatches { display: flex; margin-top: 22px; }
.sw { width: 26px; height: 26px; }
.white { background: #fff; }
.g1 { background: #e5e5e5; }
.g2 { background: #b2b2b2; }
.black { background: #000; }
.hint { margin: 8px 0 0; color: #757575; line-height: 22px; }

/* task bar */
.taskbar { height: 50px; flex: none; display: flex; background: linear-gradient(90deg, #373338, #3a363a 50%, #33313c); color: #fff; font-family: "Open Sans", sans-serif; }
.start { width: 60px; display: flex; align-items: center; justify-content: center; }
.task-search { width: 430px; display: flex; align-items: center; gap: 14px; padding-left: 14px; background: #f2f2f2; border: 1px solid #c4c4c4; }
.task-search input { flex: 1; border: 0; outline: 0; background: none; padding: 0; font-size: 17px; }
.task-search ::placeholder { color: #333; }
.apps { display: flex; margin-left: -1px; }
.apps button { width: 62px; display: flex; align-items: center; justify-content: center; }
.apps .running { background: #615e63; border-bottom: 3px solid #76b9ed; padding-top: 3px; }
.l-app { width: 30px; height: 30px; background: #25aad8; color: #fff; font: bold 24px/30px "Liberation Sans", sans-serif; text-shadow: -2px 1px #0b3a75; }
.tray { margin-left: auto; display: flex; align-items: center; gap: 12px; }
.clock { width: 84px; text-align: center; font-size: 14px; line-height: 24px; margin-left: -6px; }
.notes { position: relative; width: 34px; height: 40px; margin-right: 6px; margin-left: -4px; }
.badge { position: absolute; left: 15px; top: 19px; width: 20px; height: 20px; border: 1px solid #999; border-radius: 50%; background: #333; font: bold 13px/18px "Open Sans", sans-serif; text-align: center; color: #fff; }
.show-desktop { align-self: stretch; width: 6px; border-left: 1px solid #888; }
```
